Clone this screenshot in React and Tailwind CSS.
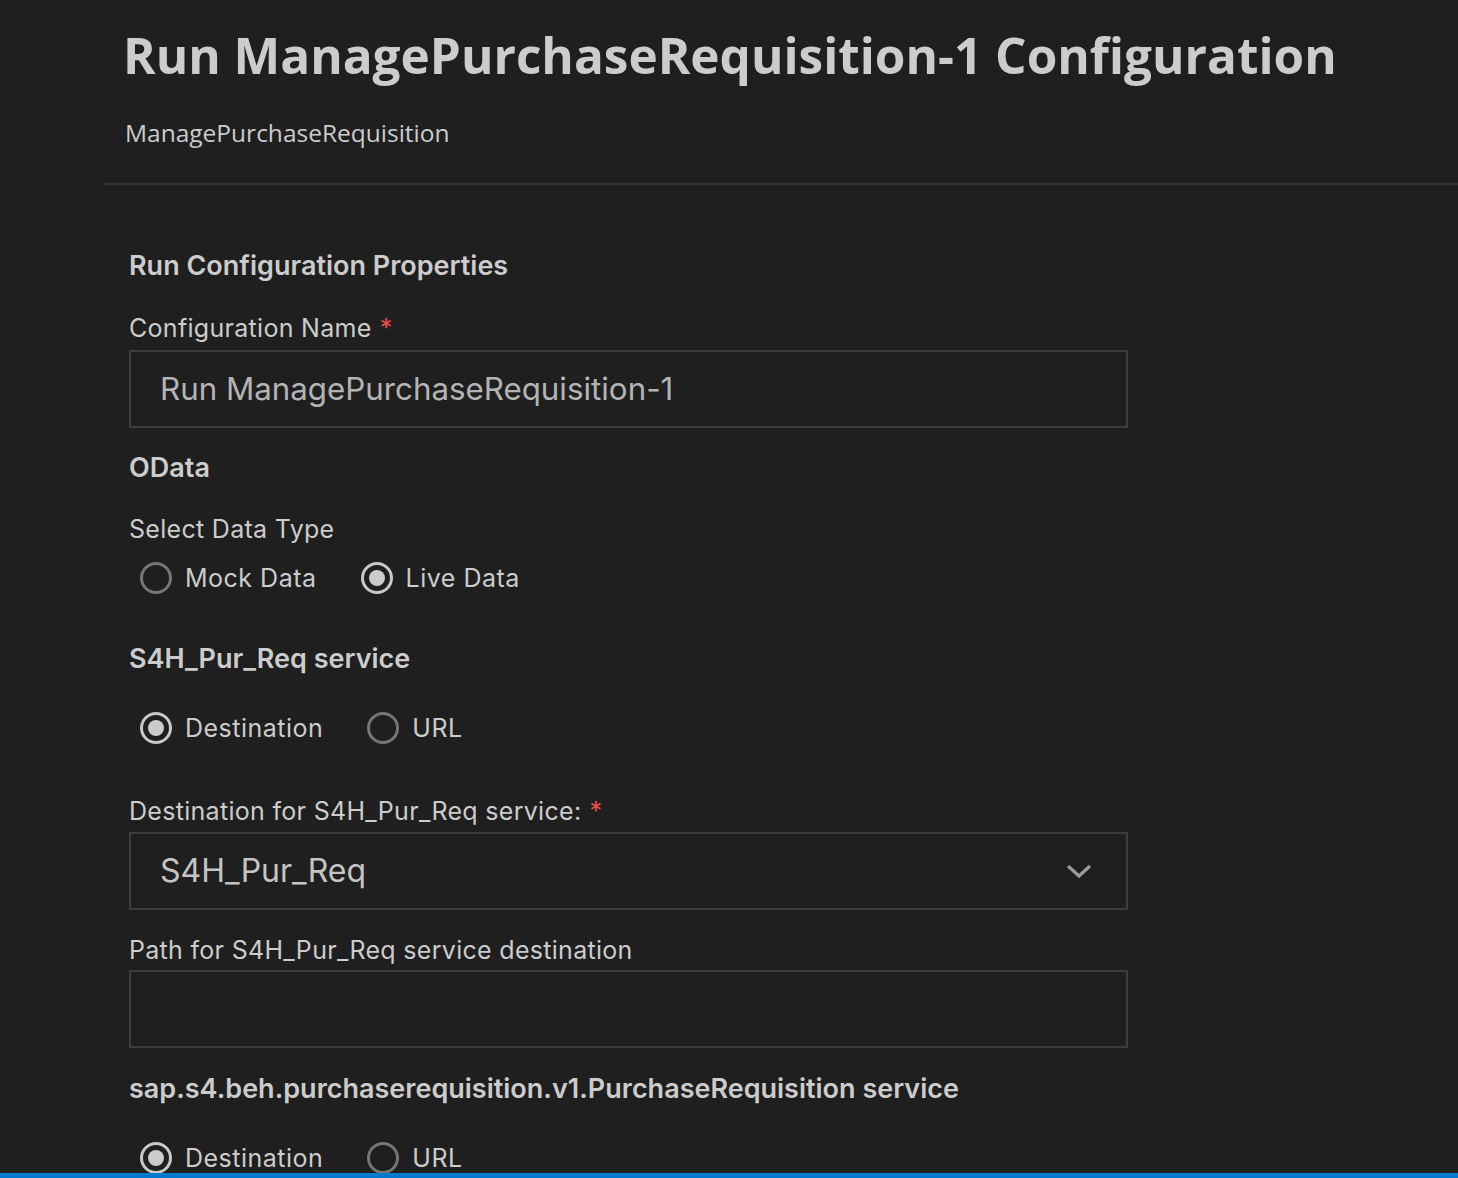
import React, { useState } from "react";

const labelFont = { fontFamily: "Inter, 'Noto Sans', sans-serif" };

function Radio({ checked, label, onClick }) {
  return (
    <button
      type="button"
      onClick={onClick}
      className="flex items-center gap-[13px] text-[25px] text-[#cccccc] leading-none tracking-[0.5px]"
    >
      <span
        className={`w-[32px] h-[32px] rounded-full border-[3px] flex items-center justify-center ${
          checked ? "border-[#c8c8c8]" : "border-[#767676]"
        }`}
      >
        {checked && <span className="w-[16px] h-[16px] rounded-full bg-[#cccccc]" />}
      </span>
      <span>{label}</span>
    </button>
  );
}

function RadioGroup({ options, value, onChange }) {
  return (
    <div className="flex items-center pl-[11px] gap-[44px]">
      {options.map((o) => (
        <Radio key={o} label={o} checked={value === o} onClick={() => onChange(o)} />
      ))}
    </div>
  );
}

function Label({ children, required }) {
  return (
    <div className="text-[25px] leading-[34px] text-[#cccccc] tracking-[0.3px]">
      {children}
      {required && <span className="text-[#f14c4c] ml-[8px]">*</span>}
    </div>
  );
}

function Heading({ children }) {
  return (
    <div className="text-[27px] leading-[34px] font-semibold text-[#cccccc]">{children}</div>
  );
}

function App() {
  const [dataType, setDataType] = useState("Live Data");
  const [svc1, setSvc1] = useState("Destination");
  const [svc2, setSvc2] = useState("Destination");

  return (
    <div className="w-full h-[1178px] bg-[#1f1f1f] overflow-hidden flex flex-col">
      <div className="flex-1 pl-[104px] overflow-hidden">
        {/* header */}
        <div
          className="pl-[19px] pt-[22px] pb-[35px] border-b-2 border-[#303030]"
          style={{ fontFamily: "'Open Sans', sans-serif" }}
        >
          <h1 className="text-[49.5px] leading-[66px] font-bold text-[#cccccc]">
            Run ManagePurchaseRequisition-1 Configuration
          </h1>
          <div className="mt-[30px] pl-[2px] text-[24.5px] leading-[30px] text-[#cccccc]">
            ManagePurchaseRequisition
          </div>
        </div>

        {/* form */}
        <div className="pl-[25px] pt-[64px] w-[1024px]" style={labelFont}>
          <Heading>Run Configuration Properties</Heading>

          <div className="mt-[28px]">
            <Label required>Configuration Name</Label>
          </div>
          <div className="mt-[5px] h-[78px] border-2 border-[#3d3d3d] flex items-center px-[29px] text-[31.3px] text-[#b4b4b4]">
            Run ManagePurchaseRequisition-1
          </div>

          <div className="mt-[23px]">
            <Heading>OData</Heading>
          </div>

          <div className="mt-[27px]">
            <Label>Select Data Type</Label>
          </div>
          <div className="mt-[16px]">
            <RadioGroup options={["Mock Data", "Live Data"]} value={dataType} onChange={setDataType} />
          </div>

          <div className="mt-[48px]">
            <Heading>S4H_Pur_Req service</Heading>
          </div>
          <div className="mt-[36px]">
            <RadioGroup options={["Destination", "URL"]} value={svc1} onChange={setSvc1} />
          </div>

          <div className="mt-[50px]">
            <Label required>Destination for S4H_Pur_Req service:</Label>
          </div>
          <div className="mt-[4px] h-[78px] border-2 border-[#3d3d3d] flex items-center justify-between pl-[29px] pr-[34px] text-[32px] text-[#c4c4c4]">
            <span>S4H_Pur_Req</span>
            <svg width="26" height="16" viewBox="0 0 26 16" fill="none">
              <path d="M2 3 L13 13 L24 3" stroke="#9a9a9a" strokeWidth="3.2" />
            </svg>
          </div>

          <div className="mt-[23px]">
            <Label>Path for S4H_Pur_Req service destination</Label>
          </div>
          <div className="mt-[3px] h-[78px] border-2 border-[#3d3d3d]" />

          <div className="mt-[24px]">
            <Heading>sap.s4.beh.purchaserequisition.v1.PurchaseRequisition service</Heading>
          </div>
          <div className="mt-[36px]">
            <RadioGroup options={["Destination", "URL"]} value={svc2} onChange={setSvc2} />
          </div>
        </div>
      </div>
      <div className="h-[5px] bg-[#007acc] shrink-0" />
    </div>
  );
}

export default App;
